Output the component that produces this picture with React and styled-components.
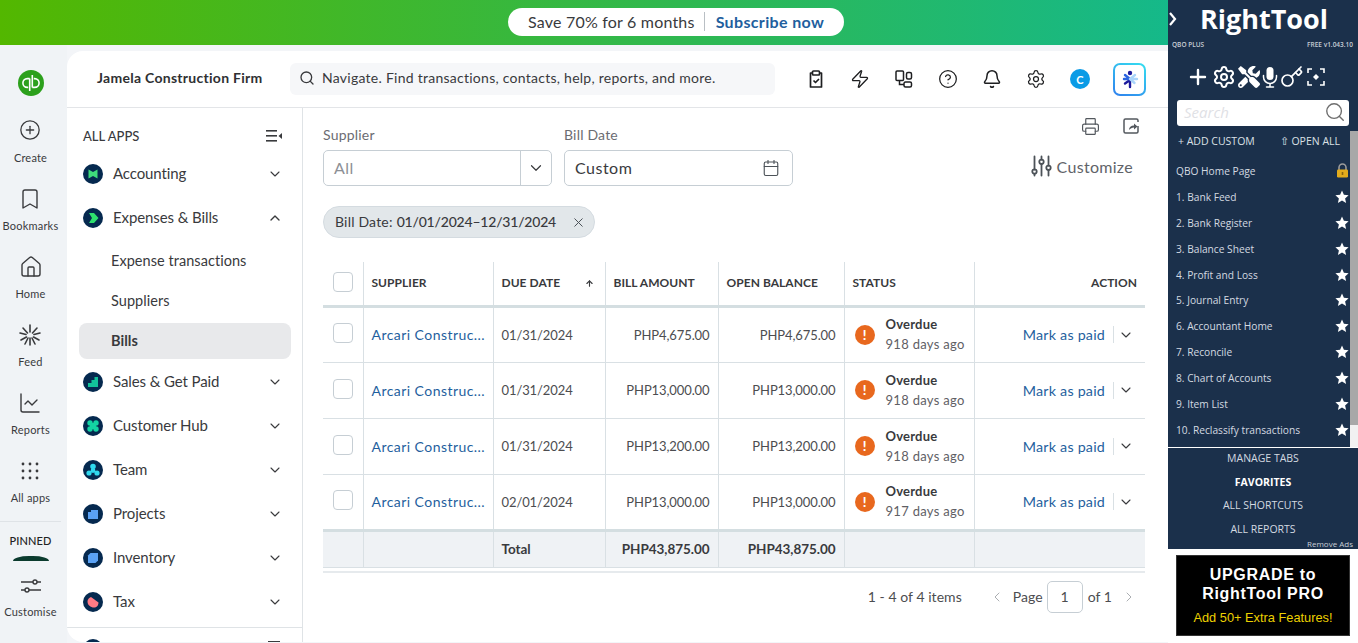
import React from 'react';
import styled, { createGlobalStyle } from 'styled-components';
import {
  ChevronDown, ChevronUp, ChevronLeft, ChevronRight, CirclePlus, Bookmark, House,
  ChartLine, Search, Zap, CircleHelp, Bell, Settings, Printer,
  Calendar, X, ArrowUp, Key, Plus,
} from 'lucide-react';
import { FaTools } from 'react-icons/fa';

const GlobalStyle = createGlobalStyle`
  html, body { margin: 0; padding: 0; height: 100%; overflow: hidden; background: #f3f5f8; }
  body { font-family: "Lato", "Open Sans", sans-serif; color: #393a3d; }
  * { box-sizing: border-box; }
`;

const Page = styled.div`
  display: flex;
  width: 1358px;
  height: 643px;
  overflow: hidden;
`;
const MainColumn = styled.div`
  display: flex;
  flex-direction: column;
  width: 1168px;
`;
const Banner = styled.div`
  flex: 0 0 45px;
  display: flex;
  align-items: center;
  justify-content: center;
  padding: 0 0 2px 184px;
  background: linear-gradient(90deg, #53b700 0, #0bb9a0 1358px);
`;
const BannerPill = styled.div`
  display: flex;
  align-items: center;
  width: 336px;
  height: 28px;
  padding-left: 20px;
  border-radius: 14px;
  background: #fff;
  font-size: 16px;
  letter-spacing: 0.2px;
  color: #393a3d;
`;
const BannerLink = styled.span`
  margin-left: 9px;
  padding-left: 11px;
  border-left: 1px solid #b9bfc4;
  line-height: 19px;
  font-weight: 700;
  letter-spacing: 0.35px;
  color: #1f5f9e;
`;
const Body = styled.div`
  flex: 1;
  display: flex;
  min-height: 0;
`;
const Rail = styled.nav`
  flex: 0 0 67px;
  display: flex;
  flex-direction: column;
  align-items: center;
  padding: 25px 6px 0 0;
  overflow: hidden;
  background: #f0f3f6;
`;
const QbLogo = styled.div`
  flex: none;
  width: 26px;
  height: 26px;
  margin-bottom: 15px;
`;
const RailItem = styled.div`
  flex: 0 0 68px;
  display: flex;
  flex-direction: column;
  align-items: center;
  padding-top: ${p => p.$top || 8}px;
  gap: ${p => p.$gap || 10}px;
  font-size: 11px;
  letter-spacing: 0.2px;
  color: #393a3d;
  svg { display: block; }
`;
const RailDivider = styled.div`
  flex: none;
  width: 61px;
  height: 1px;
  margin-top: 2px;
  background: #dfe3e7;
`;
const Pinned = styled.div`
  flex: none;
  margin-top: 12px;
  font-size: 11px;
  font-weight: 500;
  letter-spacing: 0.1px;
  color: #222;
`;
const PinnedTab = styled.div`
  flex: none;
  width: 36px;
  height: 5px;
  margin-top: 9px;
  border-radius: 16px 16px 0 0 / 5px 5px 0 0;
  background: #0b3b2e;
`;
const Shell = styled.div`
  flex: 1;
  display: flex;
  flex-direction: column;
  margin: 6px 0 1px;
  min-width: 0;
  background: #fff;
  border-radius: 16px 0 0 16px;
  overflow: hidden;
`;
const Header = styled.header`
  flex: 0 0 57px;
  display: flex;
  align-items: center;
  border-bottom: 1px solid #e3e5e8;
`;
const Company = styled.div`
  width: 223px;
  padding: 0 0 3px 30px;
  font-size: 14px;
  font-weight: 700;
  letter-spacing: 0.28px;
  color: #2f3033;
`;
const SearchBox = styled.div`
  display: flex;
  align-items: center;
  gap: 7px;
  width: 485px;
  height: 32px;
  padding: 0 0 3px 9px;
  border-radius: 6px;
  background: #f6f7f9;
  font-size: 14px;
  letter-spacing: 0.26px;
  color: #393a3d;
`;
const HeaderIcons = styled.div`
  display: flex;
  align-items: center;
  margin-left: 19px;
`;
const HeaderIcon = styled.div`
  display: flex;
  justify-content: center;
  width: 44px;
  color: #1e1f21;
`;
const Avatar = styled.div`
  display: flex;
  align-items: center;
  justify-content: center;
  width: 20px;
  height: 20px;
  border-radius: 50%;
  background: #0a9be6;
  color: #fff;
  font-size: 11px;
  font-weight: 700;
`;
const AiButton = styled.div`
  display: flex;
  align-items: center;
  justify-content: center;
  width: 33px;
  height: 33px;
  margin-left: 11px;
  border-radius: 7px;
  border: 2px solid transparent;
  background: linear-gradient(#fff, #fff) padding-box, linear-gradient(30deg, #2f7fee, #35e0f0) border-box;
`;
const Content = styled.div`
  flex: 1;
  display: flex;
  min-height: 0;
`;
const SideNav = styled.aside`
  flex: 0 0 236px;
  display: flex;
  flex-direction: column;
  overflow: hidden;
  border-right: 1px solid #dfe3e6;
`;
const AllApps = styled.div`
  flex: 0 0 44px;
  display: flex;
  align-items: center;
  justify-content: space-between;
  padding: 12px 19px 0 16px;
  font-size: 13px;
  font-weight: 500;
  color: #393a3d;
`;
const NavGroup = styled.div`
  flex: 0 0 44px;
  display: flex;
  align-items: center;
  gap: 10px;
  margin-top: ${p => p.$top || 0}px;
  padding: 0 19px 3px 16px;
  font-size: 15px;
  letter-spacing: -0.1px;
  color: #393a3d;
  span { flex: 1; }
  svg:last-child { margin-top: 3px; }
`;
const NavBadge = styled.svg`
  flex: 0 0 20px;
  width: 20px;
  height: 20px;
  margin-top: 3px;
`;
const NavSub = styled.div`
  flex: 0 0 ${p => p.$tall ? 36 : 40}px;
  display: flex;
  align-items: center;
  margin: ${p => p.$top || 0}px 11px 0 12px;
  padding: 0 0 2px 32px;
  border-radius: 8px;
  font-size: 14.5px;
  letter-spacing: 0.05px;
  font-weight: ${p => p.$active ? 700 : 400};
  background: ${p => p.$active ? '#e8e9eb' : 'transparent'};
`;
const NavFoot = styled.div`
  flex: none;
  display: flex;
  justify-content: space-between;
  margin-top: 3px;
  padding: 8px 22px 0 16px;
  border-top: 1px solid #dfe3e6;
`;
const FootMark = styled.div`
  width: 12px;
  height: 2px;
  margin-top: 5px;
  background: #393a3d;
`;
const Workspace = styled.main`
  flex: 1;
  min-width: 0;
  padding: 0 23px 0 20px;
`;
const FilterBar = styled.div`
  display: flex;
  height: 98px;
  justify-content: space-between;
`;
const Filters = styled.div`
  display: flex;
  gap: 12px;
  padding-top: 18px;
`;
const Field = styled.label`
  display: block;
  width: ${p => p.$w}px;
  font-size: 14px;
  letter-spacing: 0.2px;
  color: #6b6c72;
`;
const FieldBox = styled.div`
  display: flex;
  align-items: center;
  justify-content: space-between;
  height: 36px;
  margin-top: 7px;
  border: 1px solid #c6ced4;
  border-radius: 5px;
  font-size: 16px;
  letter-spacing: 0.5px;
  color: ${p => p.$muted ? '#8d9096' : '#393a3d'};
  padding-left: 10px;
`;
const FieldLabel = styled.span`
  padding-bottom: 2px;
`;
const FieldCaret = styled.div`
  display: flex;
  align-items: center;
  justify-content: center;
  width: 31px;
  height: 100%;
  border-left: 1px solid #c6ced4;
  color: #393a3d;
`;
const FieldIcon = styled.div`
  display: flex;
  padding-right: 12px;
  color: #4c5258;
`;
const Tools = styled.div`
  display: flex;
  flex-direction: column;
  align-items: flex-end;
  padding-top: 9px;
`;
const ToolIcons = styled.div`
  display: flex;
  gap: 22px;
  padding-right: 5px;
  color: #53585e;
`;
const CustomizeBtn = styled.div`
  display: flex;
  align-items: center;
  gap: 5px;
  margin: 19px 12px 0 0;
  font-size: 16px;
  letter-spacing: 0.3px;
  color: #5f6369;
`;
const Chip = styled.div`
  display: inline-flex;
  align-items: center;
  height: 32px;
  margin-bottom: 24px;
  padding: 0 8px 2px 11px;
  border: 1px solid #d4dbe0;
  border-radius: 16px;
  background: #e2e7ea;
  font-size: 14px;
  letter-spacing: 0.2px;
  color: #393a3d;
  b { font-weight: 500; margin-left: 4px; letter-spacing: -0.2px; }
  svg { margin: 2px 0 0 15px; color: #4c5258; }
`;
const Table = styled.table`
  width: 822px;
  border-collapse: collapse;
  table-layout: fixed;
  border-bottom: 1px solid #dfe3e6;
`;
const Th = styled.th`
  height: 44px;
  padding: 0 8px 2px;
  border-left: 1px solid #d9e0e4;
  border-bottom: 3px solid #d4dee1;
  font-size: 12px;
  font-weight: 700;
  letter-spacing: 0.04px;
  text-align: ${p => p.$right ? 'right' : 'left'};
  color: #393a3d;
  &:first-child { border-left: 0; }
`;
const Td = styled.td`
  height: 56px;
  padding: 0 8px;
  border-left: 1px solid #d9e0e4;
  border-bottom: 1px solid #d9e0e4;
  font-size: 13px;
  letter-spacing: -0.1px;
  color: #4c4d50;
  text-align: ${p => p.$right ? 'right' : 'left'};
  white-space: nowrap;
  &:first-child { border-left: 0; }
`;
const TotalTd = styled(Td)`
  height: 37px;
  background: #eff2f5;
  border-top: 3px solid #d4dee1;
  font-weight: 700;
  font-size: 13.5px;
  letter-spacing: -0.05px;
  color: #393a3d;
`;
const Check = styled.div`
  width: 20px;
  height: 20px;
  margin: 0 0 ${p => p.$row ? 3 : 0}px 2px;
  border: 1px solid #c6ced4;
  border-radius: 4px;
  background: #fff;
`;
const HeadSort = styled.div`
  display: flex;
  align-items: center;
  justify-content: space-between;
  padding-right: 3px;
  svg { color: #393a3d; margin-top: 3px; }
`;
const SupplierLink = styled.a`
  display: block;
  font-size: 14px;
  letter-spacing: 0.45px;
  color: #1f5f9e;
`;
const StatusCell = styled.div`
  display: flex;
  align-items: center;
  gap: 11px;
  padding-left: 2px;
`;
const Alert = styled.div`
  flex: 0 0 20px;
  display: flex;
  align-items: center;
  justify-content: center;
  width: 20px;
  height: 20px;
  border-radius: 50%;
  background: #e8681e;
  color: #fff;
  font-size: 13px;
  font-weight: 900;
`;
const StatusTitle = styled.div`
  font-size: 13px;
  font-weight: 700;
  letter-spacing: 0.2px;
  line-height: 20px;
  color: #393a3d;
`;
const StatusSub = styled.div`
  font-size: 13px;
  letter-spacing: 0.3px;
  line-height: 21px;
  color: #5f6065;
`;
const ActionCell = styled.div`
  display: flex;
  align-items: center;
  justify-content: flex-end;
  font-size: 14.3px;
  letter-spacing: 0.2px;
  color: #1f5f9e;
  svg { margin: 0 3px 0 4px; color: #393a3d; }
`;
const ActionText = styled.span`
  padding-right: 8px;
  border-right: 1px solid #d9e0e4;
`;
const Rule = styled.div`
  height: 2px;
  width: 822px;
  margin-top: 3px;
  background: #e6eaed;
`;
const Pager = styled.div`
  display: flex;
  align-items: center;
  justify-content: flex-end;
  width: 822px;
  margin-top: 8px;
  padding-right: 8px;
  font-size: 14px;
  letter-spacing: 0.05px;
  color: #4c4d50;
`;
const PageInput = styled.div`
  display: flex;
  align-items: center;
  justify-content: center;
  width: 36px;
  height: 32px;
  margin: 0 5px 0 4px;
  border: 1px solid #c6ced4;
  border-radius: 5px;
`;
const PagerArrow = styled.div`
  display: flex;
  margin: ${p => p.$m};
  color: #a5a8ac;
`;
const ToolPanel = styled.aside`
  flex: 0 0 190px;
  display: flex;
  flex-direction: column;
  background: #fff;
  font-family: "Open Sans", "Noto Sans", sans-serif;
`;
const PanelDark = styled.div`
  flex: 0 0 549px;
  display: flex;
  flex-direction: column;
  background: #1b304b;
  color: #fff;
`;
const PanelTitle = styled.div`
  flex: 0 0 38px;
  display: flex;
  align-items: center;
  padding-bottom: 2px;
  span {
    flex: 1;
    padding-right: 8px;
    text-align: center;
    font-size: 27px;
    font-weight: 700;
  }
`;
const PanelMeta = styled.div`
  flex: 0 0 22px;
  display: flex;
  justify-content: space-between;
  padding: 1px 5px 0 4px;
  font-size: 6.5px;
  font-weight: 600;
  color: #c8ced6;
`;
const PanelTools = styled.div`
  flex: 0 0 39px;
  display: flex;
  align-items: center;
  justify-content: center;
  gap: 2px;
  padding: 0 14px 7px 0;
`;
const PanelSearch = styled.div`
  flex: 0 0 26px;
  display: flex;
  align-items: center;
  justify-content: space-between;
  margin: 0 9px 5px;
  padding: 0 3px 2px 7px;
  border-radius: 3px;
  background: #fff;
  font-size: 15px;
  font-style: italic;
  color: #dfe1e5;
  svg { color: #6e6e6e; }
`;
const ScrollArea = styled.div`
  flex: 0 0 317px;
  display: flex;
  border-bottom: 1px solid #fff;
`;
const ScrollBody = styled.div`
  flex: 1;
  min-width: 0;
`;
const PanelActions = styled.div`
  display: flex;
  justify-content: space-between;
  height: 27px;
  padding: 3px 10px 0 10px;
  font-size: 10.5px;
  color: #dbe0e6;
`;
const FavList = styled.ul`
  margin: 0;
  padding: 0 0 0 8px;
  list-style: none;
  font-size: 10.2px;
  color: #d4dae1;
`;
const FavRow = styled.li`
  display: flex;
  align-items: center;
  justify-content: space-between;
  height: 25.9px;
  padding-right: 1px;
  svg { display: block; }
`;
const ScrollTrack = styled.div`
  flex: 0 0 8px;
  background: #f1f1f1;
`;
const ScrollThumb = styled.div`
  height: 294px;
  background: #a8a8a8;
`;
const PanelLinks = styled.div`
  position: relative;
  flex: 1;
  display: flex;
  flex-direction: column;
  align-items: center;
  margin-top: -1px;
  font-size: 10.5px;
  color: #d4dae1;
`;
const PanelLink = styled.div`
  height: 23.6px;
  line-height: 23.6px;
  font-weight: ${p => p.$strong ? 700 : 400};
  color: ${p => p.$strong ? '#fff' : '#d4dae1'};
`;
const RemoveAds = styled.div`
  position: absolute;
  right: 5px;
  bottom: 0;
  font-size: 8px;
  color: #c8ced6;
`;
const UpgradeAd = styled.div`
  height: 81px;
  margin: 6px 8px 0;
  padding-top: 9px;
  border: 1px solid #333;
  background: #000;
  font-family: "Liberation Sans", Arial, sans-serif;
  text-align: center;
  color: #fff;
`;
const UpgradeTitle = styled.div`
  font-size: 16px;
  font-weight: 700;
  line-height: 19px;
  letter-spacing: 0.7px;
`;
const UpgradeNote = styled.div`
  margin-top: 7px;
  font-size: 12.8px;
  color: #ecd000;
`;

const dot = (x, y, r) => `M${x - r} ${y}a${r} ${r} 0 1 0 ${r * 2} 0a${r} ${r} 0 1 0 ${-r * 2} 0Z`;

const badges = {
  accounting: { color: '#3fdc7b', d: 'M5.5 5.5 L10 8 L14.5 5.5 V14.5 L10 12 L5.5 14.5 Z' },
  expenses: { color: '#2ee06e', d: 'M6 5 H11 L15.5 10 L11 15 H6 L9 10 Z' },
  sales: { color: '#12c39a', d: 'M5 15 V11 H8.5 V8 H11.5 V5 H15 V15 Z' },
  customers: { color: '#13d3a3', d: `${dot(7, 7, 2.7)}${dot(13, 7, 2.7)}${dot(7, 13, 2.7)}${dot(13, 13, 2.7)}${dot(10, 10, 3)}` },
  team: { color: '#30d9ee', d: `${dot(10, 6.5, 2.8)}${dot(6, 13, 2.6)}${dot(14, 13, 2.6)}${dot(10, 10.5, 2.4)}` },
  projects: { color: '#5aa2f5', d: 'M5 8 L8 8 L8 6 H15 V15 H5 Z' },
  inventory: { color: '#5aa2f5', d: 'M7.5 5 H15 V12.5 L12.5 15 H5 V7.5 Z' },
  tax: { color: '#ff7a85', d: 'M8 5 L15.5 10.5 C15.5 13.5 13.5 15.5 11 15.5 C7.5 15.5 4.5 13 4.5 9.5 C4.5 7.5 6 5.5 8 5 Z' },
};

const NavIcon = ({ kind }) => (
  <NavBadge viewBox="0 0 20 20">
    <circle cx="10" cy="10" r="10" fill="#05294f" />
    <path d={badges[kind].d} fill={badges[kind].color} />
  </NavBadge>
);

const Group = ({ kind, label, open, top }) => (
  <NavGroup $top={top}>
    <NavIcon kind={kind} />
    <span>{label}</span>
    {open ? <ChevronUp size={16} /> : <ChevronDown size={16} strokeWidth={1.6} />}
  </NavGroup>
);

const FeedIcon = () => (
  <svg width="24" height="24" viewBox="0 0 24 24" fill="none" stroke="#393a3d" strokeWidth="1.6" strokeLinecap="round">
    <path d="M12 2v7M12 15v7M5 5l4.5 5M19 5l-4.5 5M2 10l6 1.5M22 10l-6 1.5M3 17l5.5-3M21 17l-5.5-3M7 21l3-6M17 21l-3-6" />
  </svg>
);

const AppsIcon = () => (
  <svg width="18" height="18" viewBox="0 0 18 18" fill="#393a3d">
    {[2, 9, 16].flatMap(y => [2, 9, 16].map(x => <circle key={`${x}-${y}`} cx={x} cy={y} r="1.4" />))}
  </svg>
);

const CustomiseIcon = () => (
  <svg width="22" height="18" viewBox="0 0 22 18" fill="none" stroke="#393a3d" strokeWidth="1.4">
    <path d="M1 5h12M17 5h4M1 13h4M9 13h12" />
    <circle cx="15" cy="5" r="2" /><circle cx="7" cy="13" r="2" />
  </svg>
);

const TasksIcon = () => (
  <svg width="20" height="20" viewBox="0 0 20 20" fill="none" stroke="currentColor" strokeWidth="1.7" strokeLinejoin="round">
    <path d="M6.5 4H4.5v14h11V4h-2" /><rect x="6.5" y="2" width="7" height="4" rx="1" />
    <path d="M7.5 11.5l2 2 3.5-3.5" />
  </svg>
);

const AppsBoxIcon = () => (
  <svg width="20" height="20" viewBox="0 0 20 20" fill="none" stroke="currentColor" strokeWidth="1.5">
    <rect x="2" y="2" width="7.5" height="9.5" rx="1" /><rect x="12.5" y="3.5" width="5" height="6.5" rx="1.5" />
    <rect x="10" y="13" width="7.5" height="5" rx="1.5" /><path d="M5.5 11.5V15.5H10" />
  </svg>
);

const SparkIcon = () => (
  <svg width="20" height="20" viewBox="0 0 20 20" fill="none" strokeLinecap="round" strokeWidth="2.4">
    <path d="M10 11v7M10 11l-5 3.5" stroke="#1c1a9c" />
    <path d="M10 10L5 6M10 10H4" stroke="#2c66e0" />
    <path d="M10 10l4.5 4M10 10h7M10 10l5-4" stroke="#a9d4fa" />
    <circle cx="10" cy="4" r="2.2" fill="#1c1a9c" />
  </svg>
);

const CollapseIcon = () => (
  <svg width="17" height="12" viewBox="0 0 17 12" fill="#393a3d">
    <rect x="0" y="0" width="11" height="1.6" /><rect x="0" y="5" width="11" height="1.6" /><rect x="0" y="10" width="11" height="1.6" />
    <path d="M16 3v6l-3.5-3z" />
  </svg>
);

const ExportIcon = () => (
  <svg width="18" height="18" viewBox="0 0 18 18" fill="none" stroke="currentColor" strokeWidth="1.5" strokeLinejoin="round">
    <path d="M9 2H3.5A1.5 1.5 0 0 0 2 3.5v11A1.5 1.5 0 0 0 3.5 16h11a1.5 1.5 0 0 0 1.5-1.5V9M16 5V3.5A1.5 1.5 0 0 0 14.5 2H9" />
    <path d="M7 13c0-3 2-4.5 5-4.5V6.5l3.5 3-3.5 3v-2c-2 0-3.5 1-5 2.5z" fill="currentColor" stroke="none" />
  </svg>
);

const TuneIcon = () => (
  <svg width="21" height="22" viewBox="0 0 21 22" fill="none" stroke="#4c5258" strokeWidth="1.8" strokeLinecap="round">
    <path d="M3.5 1.5v13M3.5 19v1.5M10.5 1.5v3M10.5 9v11.5M17.5 1.5v9M17.5 15v5.5" />
    <circle cx="3.5" cy="16.5" r="2.2" /><circle cx="10.5" cy="6.8" r="2.2" /><circle cx="17.5" cy="12.8" r="2.2" />
  </svg>
);

const ScanIcon = () => (
  <svg width="20" height="20" viewBox="0 0 20 20" fill="none" stroke="#fff" strokeWidth="1.6">
    <path d="M2 6V2h4M14 2h4v4M18 14v4h-4M6 18H2v-4" />
    <path d="M10 7l3 3-3 3-3-3z" fill="#fff" stroke="none" />
  </svg>
);

const MicIcon = () => (
  <svg width="16" height="22" viewBox="0 0 16 22" fill="none" stroke="#fff" strokeWidth="1.5" strokeLinecap="round">
    <rect x="4.5" y="1" width="7" height="13" rx="3.5" fill="#fff" stroke="none" />
    <path d="M1.5 9.5v1.500a6.500 6.500 0 0 0 13 0V9.500M8 17.500V21M4.500 21h7" />
  </svg>
);

const PanelCaret = () => (
  <svg width="10" height="16" viewBox="0 0 10 16" fill="none" stroke="#fff" strokeWidth="2.2">
    <path d="M2 2l5 6-5 6" />
  </svg>
);

const GoldLock = () => (
  <svg width="13" height="15" viewBox="0 0 13 15">
    <path d="M3 7V4.500a3.500 3.500 0 0 1 7 0V7" fill="none" stroke="#9c9c9c" strokeWidth="1.6" />
    <rect x="1" y="6.500" width="11" height="8" rx="1.2" fill="#e3ac1c" />
    <rect x="5.7" y="9" width="1.6" height="3" fill="#8a6510" />
  </svg>
);

const WhiteStar = () => (
  <svg width="14" height="14" viewBox="0 0 14 14" fill="#fff">
    <path d="M7 0.500l1.900 4.300 4.700.5-3.500 3.100 1 4.600L7 10.600l-4.100 2.400 1-4.600L.4 5.300l4.700-.5z" />
  </svg>
);

const QbGlyph = () => (
  <QbLogo>
    <svg width="26" height="26" viewBox="0 0 26 26" fill="none" stroke="#fff" strokeWidth="1.6">
      <circle cx="13" cy="13" r="13" fill="#2ca01c" stroke="none" />
      <path d="M11.7 8.600V21M14.300 5V17.400M11.700 8.600H9.300a4.400 4.400 0 0 0 0 8.800H10.200M14.300 17.400h2.400a4.400 4.400 0 0 0 0-8.800H15.800" />
    </svg>
  </QbLogo>
);

const railItems = [
  { label: 'Create', icon: <CirclePlus size={22} strokeWidth={1.4} /> },
  { label: 'Bookmarks', icon: <Bookmark size={24} strokeWidth={1.4} />, gap: 8 },
  { label: 'Home', icon: <House size={24} strokeWidth={1.4} />, gap: 8 },
  { label: 'Feed', icon: <FeedIcon />, gap: 8 },
  { label: 'Reports', icon: <ChartLine size={24} strokeWidth={1.4} />, gap: 8 },
  { label: 'All apps', icon: <AppsIcon />, gap: 11, top: 11 },
];

const rows = [
  { due: '01/31/2024', bill: 'PHP4,675.00', days: '918 days ago' },
  { due: '01/31/2024', bill: 'PHP13,000.00', days: '918 days ago' },
  { due: '01/31/2024', bill: 'PHP13,200.00', days: '918 days ago' },
  { due: '02/01/2024', bill: 'PHP13,000.00', days: '917 days ago' },
];

const favorites = [
  '1. Bank Feed', '2. Bank Register', '3. Balance Sheet', '4. Profit and Loss', '5. Journal Entry',
  '6. Accountant Home', '7. Reconcile', '8. Chart of Accounts', '9. Item List', '10. Reclassify transactions',
];

export default function App() {
  return (
    <Page>
      <GlobalStyle />
      <MainColumn>
        <Banner>
          <BannerPill>Save 70% for 6 months<BannerLink>Subscribe now</BannerLink></BannerPill>
        </Banner>
        <Body>
          <Rail>
            <QbGlyph />
            {railItems.map(item => (
              <RailItem key={item.label} $gap={item.gap} $top={item.top}>{item.icon}{item.label}</RailItem>
            ))}
            <RailDivider />
            <Pinned>PINNED</Pinned>
            <PinnedTab />
            <RailItem $top={16} $gap={10}><CustomiseIcon />Customise</RailItem>
          </Rail>
          <Shell>
            <Header>
              <Company>Jamela Construction Firm</Company>
              <SearchBox><Search size={16} strokeWidth={2} />Navigate. Find transactions, contacts, help, reports, and more.</SearchBox>
              <HeaderIcons>
                <HeaderIcon><TasksIcon /></HeaderIcon>
                <HeaderIcon><Zap size={20} strokeWidth={1.6} /></HeaderIcon>
                <HeaderIcon><AppsBoxIcon /></HeaderIcon>
                <HeaderIcon><CircleHelp size={20} strokeWidth={1.5} /></HeaderIcon>
                <HeaderIcon><Bell size={20} strokeWidth={1.8} /></HeaderIcon>
                <HeaderIcon><Settings size={20} strokeWidth={1.5} /></HeaderIcon>
                <HeaderIcon><Avatar>C</Avatar></HeaderIcon>
                <AiButton><SparkIcon /></AiButton>
              </HeaderIcons>
            </Header>
            <Content>
              <SideNav>
                <AllApps>ALL APPS<CollapseIcon /></AllApps>
                <Group kind="accounting" label="Accounting" />
                <Group kind="expenses" label="Expenses & Bills" open />
                <NavSub $top={1}>Expense transactions</NavSub>
                <NavSub>Suppliers</NavSub>
                <NavSub $active $tall $top={2}>Bills</NavSub>
                <Group kind="sales" label="Sales & Get Paid" top={1} />
                <Group kind="customers" label="Customer Hub" />
                <Group kind="team" label="Team" />
                <Group kind="projects" label="Projects" />
                <Group kind="inventory" label="Inventory" />
                <Group kind="tax" label="Tax" />
                <NavFoot><NavIcon kind="tax" /><FootMark /></NavFoot>
              </SideNav>
              <Workspace>
                <FilterBar>
                  <Filters>
                    <Field $w={229}>Supplier
                      <FieldBox $muted><FieldLabel>All</FieldLabel><FieldCaret><ChevronDown size={18} strokeWidth={1.6} /></FieldCaret></FieldBox>
                    </Field>
                    <Field $w={229}>Bill Date
                      <FieldBox><FieldLabel>Custom</FieldLabel><FieldIcon><Calendar size={18} strokeWidth={1.5} /></FieldIcon></FieldBox>
                    </Field>
                  </Filters>
                  <Tools>
                    <ToolIcons><Printer size={19} strokeWidth={1.5} /><ExportIcon /></ToolIcons>
                    <CustomizeBtn><TuneIcon />Customize</CustomizeBtn>
                  </Tools>
                </FilterBar>
                <Chip>Bill Date:<b>01/01/2024–12/31/2024</b><X size={15} strokeWidth={1.6} /></Chip>
                <Table>
                  <colgroup>
                    <col width="40" /><col width="130" /><col width="112" /><col width="113" />
                    <col width="126" /><col width="130" /><col width="171" />
                  </colgroup>
                  <thead>
                    <tr>
                      <Th><Check /></Th>
                      <Th>SUPPLIER</Th>
                      <Th><HeadSort>DUE DATE<ArrowUp size={9} strokeWidth={3} /></HeadSort></Th>
                      <Th>BILL AMOUNT</Th>
                      <Th>OPEN BALANCE</Th>
                      <Th>STATUS</Th>
                      <Th $right>ACTION</Th>
                    </tr>
                  </thead>
                  <tbody>
                    {rows.map((row, i) => (
                      <tr key={i}>
                        <Td><Check $row /></Td>
                        <Td><SupplierLink>Arcari Construc...</SupplierLink></Td>
                        <Td>{row.due}</Td>
                        <Td $right>{row.bill}</Td>
                        <Td $right>{row.bill}</Td>
                        <Td>
                          <StatusCell>
                            <Alert>!</Alert>
                            <div><StatusTitle>Overdue</StatusTitle><StatusSub>{row.days}</StatusSub></div>
                          </StatusCell>
                        </Td>
                        <Td>
                          <ActionCell><ActionText>Mark as paid</ActionText><ChevronDown size={16} strokeWidth={1.6} /></ActionCell>
                        </Td>
                      </tr>
                    ))}
                    <tr>
                      <TotalTd /><TotalTd />
                      <TotalTd>Total</TotalTd>
                      <TotalTd $right>PHP43,875.00</TotalTd>
                      <TotalTd $right>PHP43,875.00</TotalTd>
                      <TotalTd /><TotalTd />
                    </tr>
                  </tbody>
                </Table>
                <Rule />
                <Pager>
                  1 - 4 of 4 items
                  <PagerArrow $m="0 8px 0 27px"><ChevronLeft size={16} strokeWidth={1.4} /></PagerArrow>
                  Page
                  <PageInput>1</PageInput>
                  of 1
                  <PagerArrow $m="0 0 0 9px"><ChevronRight size={16} strokeWidth={1.4} /></PagerArrow>
                </Pager>
              </Workspace>
            </Content>
          </Shell>
        </Body>
      </MainColumn>
      <ToolPanel>
        <PanelDark>
          <PanelTitle><PanelCaret /><span>RightTool</span></PanelTitle>
          <PanelMeta><span>QBO PLUS</span><span>FREE v1.043.10</span></PanelMeta>
          <PanelTools>
            <Plus size={24} strokeWidth={2.4} />
            <Settings size={24} strokeWidth={2} />
            <FaTools size={22} />
            <MicIcon />
            <Key size={24} strokeWidth={1.7} />
            <ScanIcon />
          </PanelTools>
          <PanelSearch>Search<Search size={22} strokeWidth={1.5} /></PanelSearch>
          <ScrollArea>
            <ScrollBody>
              <PanelActions><span>+ ADD CUSTOM</span><span>⇧ OPEN ALL</span></PanelActions>
              <FavList>
                <FavRow>QBO Home Page<GoldLock /></FavRow>
                {favorites.map(name => (
                  <FavRow key={name}>{name}<WhiteStar /></FavRow>
                ))}
              </FavList>
            </ScrollBody>
            <ScrollTrack><ScrollThumb /></ScrollTrack>
          </ScrollArea>
          <PanelLinks>
            <PanelLink>MANAGE TABS</PanelLink>
            <PanelLink $strong>FAVORITES</PanelLink>
            <PanelLink>ALL SHORTCUTS</PanelLink>
            <PanelLink>ALL REPORTS</PanelLink>
            <RemoveAds>Remove Ads</RemoveAds>
          </PanelLinks>
        </PanelDark>
        <UpgradeAd>
          <UpgradeTitle>UPGRADE to<br />RightTool PRO</UpgradeTitle>
          <UpgradeNote>Add 50+ Extra Features!</UpgradeNote>
        </UpgradeAd>
      </ToolPanel>
    </Page>
  );
}
